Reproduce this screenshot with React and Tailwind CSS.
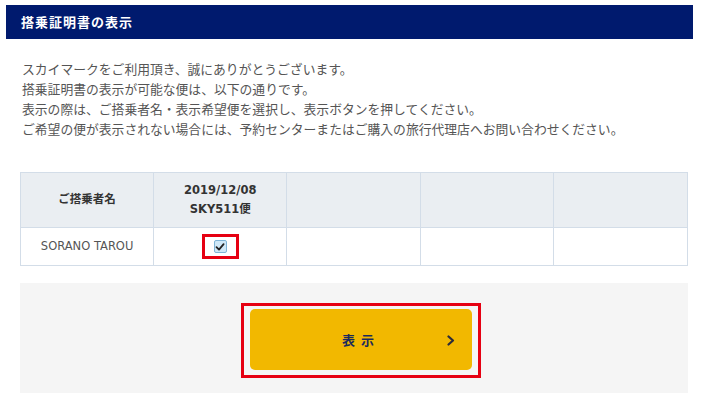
import React from 'react'

const jp = { fontFamily: '"Noto Sans CJK JP", sans-serif' }
const mixed = { fontFamily: '"DejaVu Sans", "Noto Sans CJK JP", sans-serif' }

function CheckBox() {
    return (
        <div className="flex h-[25px] w-[37px] items-center justify-center border-[3px] border-[#e60012]">
            <div className="flex h-[13px] w-[13px] items-center justify-center rounded-[2px] border border-[#7fb4d6] bg-[#cfe8f7]">
                <svg width="10" height="10" viewBox="0 0 10 10">
                    <path d="M1.5 5.2 L4 7.6 L8.6 2.2" fill="none" stroke="#222" strokeWidth="1.8" strokeLinecap="round" strokeLinejoin="round" />
                </svg>
            </div>
        </div>
    )
}

export default function App() {
    const lines = [
        "スカイマークをご利用頂き、誠にありがとうございます。",
        "搭乗証明書の表示が可能な便は、以下の通りです。",
        "表示の際は、ご搭乗者名・表示希望便を選択し、表示ボタンを押してください。",
        "ご希望の便が表示されない場合には、予約センターまたはご購入の旅行代理店へお問い合わせください。",
    ]

    return (
        <div className="h-[407px] w-[706px] bg-white pl-[6px] pt-[5px]" style={jp}>
            <div className="flex h-[34px] w-[687px] items-center bg-[#001a6e] pl-[15px] text-[13px] font-bold tracking-[1px] text-white">
                搭乗証明書の表示
            </div>

            <div className="ml-[14px] w-[668px]">
                <div className="mt-[20px] pl-[2px] text-[12.8px] leading-[20px] text-[#555]">
                    {lines.map((l, i) => <p key={i}>{l}</p>)}
                </div>

                <div className="mt-[33px] grid grid-cols-5 border border-[#d3dde8]" style={mixed}>
                    <div className="flex h-[55px] items-center justify-center border-r border-b border-[#d3dde8] bg-[#eaeef2] text-[11.5px] font-bold text-[#333]">ご搭乗者名</div>
                    <div className="flex h-[55px] flex-col items-center justify-center border-r border-b border-[#d3dde8] bg-[#eaeef2] text-[11.5px] font-bold leading-[19px] text-[#333]">
                        <span>2019/12/08</span>
                        <span>SKY511便</span>
                    </div>
                    <div className="h-[55px] border-r border-b border-[#d3dde8] bg-[#eaeef2]"></div>
                    <div className="h-[55px] border-r border-b border-[#d3dde8] bg-[#eaeef2]"></div>
                    <div className="h-[55px] border-b border-[#d3dde8] bg-[#eaeef2]"></div>

                    <div className="flex h-[37px] items-center justify-center border-r border-[#d3dde8] text-[11.5px] text-[#555]">SORANO TAROU</div>
                    <div className="flex h-[37px] items-center justify-center border-r border-[#d3dde8]">
                        <CheckBox />
                    </div>
                    <div className="h-[37px] border-r border-[#d3dde8]"></div>
                    <div className="h-[37px] border-r border-[#d3dde8]"></div>
                    <div className="h-[37px]"></div>
                </div>

                <div className="mt-[17px] h-[110px] bg-[#f5f5f5] pl-[221px] pt-[20px]">
                    <div className="w-[240px] border-[3px] border-[#e60012] px-[6px] pb-[5px] pt-[3px]">
                        <button className="relative flex h-[61px] w-[222px] items-center justify-center rounded-[5px] bg-[#f2b800] text-[13px] font-bold tracking-[6px] text-[#1b2a5c]">
                            表示
                            <svg className="absolute right-[17px] top-[26px]" width="8" height="11" viewBox="0 0 8 11">
                                <path d="M1.5 1.5 L6 5.5 L1.5 9.5" fill="none" stroke="#2b2b3a" strokeWidth="2.2" strokeLinecap="round" strokeLinejoin="round" />
                            </svg>
                        </button>
                    </div>
                </div>
            </div>
        </div>
    )
}
